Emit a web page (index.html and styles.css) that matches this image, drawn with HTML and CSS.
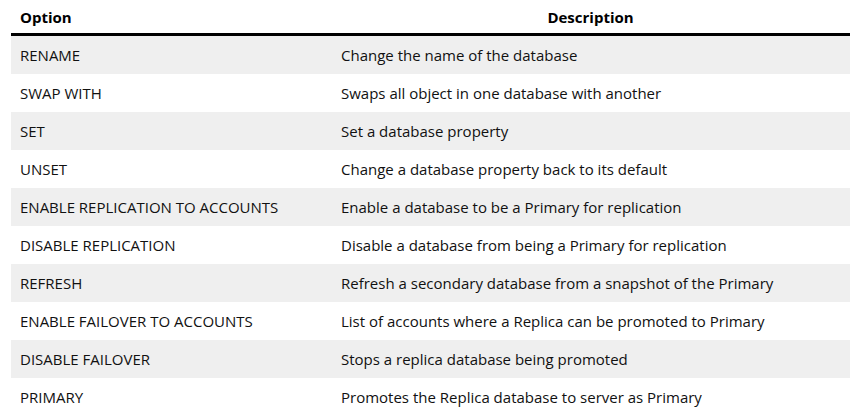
FILE: index.html
```html
<!DOCTYPE html>
<html>
<head>
<meta charset="utf-8">
<link rel="stylesheet" href="styles.css">
</head>
<body>
<table class="opts">
  <thead>
    <tr><th class="c1">Option</th><th class="c2">Description</th></tr>
  </thead>
  <tbody>
    <tr><td>RENAME</td><td>Change the name of the database</td></tr>
    <tr><td>SWAP WITH</td><td>Swaps all object in one database with another</td></tr>
    <tr><td>SET</td><td>Set a database property</td></tr>
    <tr><td>UNSET</td><td>Change a database property back to its default</td></tr>
    <tr><td>ENABLE REPLICATION TO ACCOUNTS</td><td>Enable a database to be a Primary for replication</td></tr>
    <tr><td>DISABLE REPLICATION</td><td>Disable a database from being a Primary for replication</td></tr>
    <tr><td>REFRESH</td><td>Refresh a secondary database from a snapshot of the Primary</td></tr>
    <tr><td>ENABLE FAILOVER TO ACCOUNTS</td><td>List of accounts where a Replica can be promoted to Primary</td></tr>
    <tr><td>DISABLE FAILOVER</td><td>Stops a replica database being promoted</td></tr>
    <tr><td>PRIMARY</td><td>Promotes the Replica database to server as Primary</td></tr>
  </tbody>
</table>
</body>
</html>
```
FILE: styles.css
```css
html, body {
  margin: 0;
  padding: 0;
  background: #fff;
}
body {
  padding: 0 8px 0 11px;
  font-family: "Open Sans", "Noto Sans", sans-serif;
  font-size: 15px;
  color: #111;
}
.opts {
  border-collapse: separate;
  border-spacing: 0;
  width: 839px;
  table-layout: fixed;
}
.opts th {
  height: 36px;
  padding: 0 9px;
  font-weight: 700;
  color: #000;
  border-bottom: 3px solid #000;
  vertical-align: middle;
  box-sizing: border-box;
}
.opts th.c1 { width: 320px; text-align: left; }
.opts th.c2 { text-align: center; }
.opts td {
  height: 38px;
  padding: 0 9px;
  box-sizing: border-box;
  vertical-align: middle;
}
.opts td + td { padding-left: 10px; }
.opts tbody tr:nth-child(odd) td { background: #efefef; }
```
